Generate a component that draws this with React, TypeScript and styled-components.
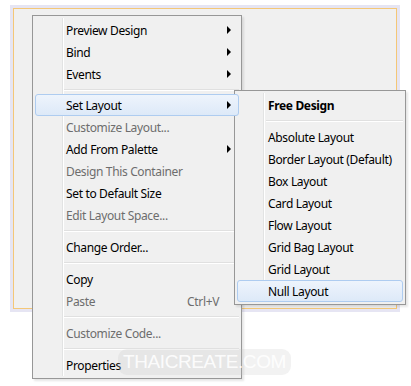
import React from "react";
import styled, { createGlobalStyle } from "styled-components";

const Global = createGlobalStyle`
  html, body { margin: 0; padding: 0; background: #ffffff; }
  body { font-family: "Noto Sans", "Open Sans", sans-serif; }
`;

const Page = styled.div`
  position: relative;
  width: 411px;
  height: 386px;
  overflow: hidden;
  box-sizing: border-box;
  padding: 5px 0 0 10px;
  background: #ffffff;
`;

const Frame = styled.div`
  width: 390px;
  height: 307px;
  box-sizing: border-box;
  border: 3px solid #e6e5f3;
  display: flex;
`;

const Canvas = styled.div`
  flex: 1;
  border: 1px solid #f4c777;
  background: #f0f0f0;
`;

const Menu = styled.div<{ $left: number; $top: number; $width: number; $gutter: number }>`
  position: absolute;
  left: ${(p) => p.$left}px;
  top: ${(p) => p.$top}px;
  width: ${(p) => p.$width}px;
  box-sizing: border-box;
  border: 1px solid #979797;
  background: #f0f0f0;
  padding: 3px 2px 2px 2px;
  display: flex;
  flex-direction: column;
  box-shadow: 2px 2px 2px rgba(0, 0, 0, 0.1);
  &::before {
    content: "";
    position: absolute;
    top: 2px;
    bottom: 2px;
    left: ${(p) => p.$gutter}px;
    width: 1px;
    background: #e2e3e3;
    border-right: 1px solid #ffffff;
  }
`;

const Item = styled.div<{ $disabled?: boolean; $active?: boolean; $bold?: boolean; $indent: number }>`
  position: relative;
  height: 22px;
  display: flex;
  align-items: center;
  box-sizing: border-box;
  padding-left: ${(p) => p.$indent}px;
  padding-right: 8px;
  font-size: 12px;
  letter-spacing: -0.35px;
  font-weight: ${(p) => (p.$bold ? 700 : 400)};
  color: ${(p) => (p.$disabled ? "#6d6d6d" : "#000000")};
  border: 1px solid ${(p) => (p.$active ? "#aeccf0" : "transparent")};
  border-radius: 3px;
  background: ${(p) =>
    p.$active ? "linear-gradient(to bottom, #eef4fc 0%, #dde9f8 100%)" : "transparent"};
  z-index: 1;
`;

const Label = styled.span`
  flex: 1;
  white-space: nowrap;
`;

const Shortcut = styled.span`
  color: #6d6d6d;
  margin-right: 11px;
`;

const Arrow = styled.span`
  width: 0;
  height: 0;
  border-top: 4px solid transparent;
  border-bottom: 4px solid transparent;
  border-left: 4px solid #000000;
  margin-right: -1px;
`;

const Separator = styled.div<{ $indent: number; $h: number }>`
  height: ${(p) => p.$h}px;
  display: flex;
  align-items: center;
  padding-left: ${(p) => p.$indent}px;
  &::after {
    content: "";
    flex: 1;
    height: 1px;
    background: #e0e0e0;
    border-bottom: 1px solid #ffffff;
  }
`;

const Watermark = styled.div`
  position: absolute;
  left: 118px;
  top: 349px;
  padding: 2px 5px;
  border-radius: 9px;
  background: rgba(190, 190, 190, 0.2);
  color: rgba(255, 255, 255, 0.9);
  font-family: "Liberation Sans", Arial, sans-serif;
  font-size: 19px;
  letter-spacing: -0.4px;
  z-index: 5;
`;

type Entry =
  | { kind: "item"; label: string; disabled?: boolean; sub?: boolean; active?: boolean; bold?: boolean; shortcut?: string }
  | { kind: "sep"; h: number };

const mainItems: Entry[] = [
  { kind: "item", label: "Preview Design", sub: true },
  { kind: "item", label: "Bind", sub: true },
  { kind: "item", label: "Events", sub: true },
  { kind: "sep", h: 9 },
  { kind: "item", label: "Set Layout", sub: true, active: true },
  { kind: "item", label: "Customize Layout...", disabled: true },
  { kind: "item", label: "Add From Palette", sub: true },
  { kind: "item", label: "Design This Container", disabled: true },
  { kind: "item", label: "Set to Default Size" },
  { kind: "item", label: "Edit Layout Space...", disabled: true },
  { kind: "sep", h: 10 },
  { kind: "item", label: "Change Order..." },
  { kind: "sep", h: 10 },
  { kind: "item", label: "Copy" },
  { kind: "item", label: "Paste", disabled: true, shortcut: "Ctrl+V" },
  { kind: "sep", h: 10 },
  { kind: "item", label: "Customize Code...", disabled: true },
  { kind: "sep", h: 10 },
  { kind: "item", label: "Properties" },
];

const subItems: Entry[] = [
  { kind: "item", label: "Free Design", bold: true },
  { kind: "sep", h: 10 },
  { kind: "item", label: "Absolute Layout" },
  { kind: "item", label: "Border Layout (Default)" },
  { kind: "item", label: "Box Layout" },
  { kind: "item", label: "Card Layout" },
  { kind: "item", label: "Flow Layout" },
  { kind: "item", label: "Grid Bag Layout" },
  { kind: "item", label: "Grid Layout" },
  { kind: "item", label: "Null Layout", active: true },
];

function renderEntries(entries: Entry[], indent: number, sepIndent: number) {
  return entries.map((e, i) =>
    e.kind === "sep" ? (
      <Separator key={i} $indent={sepIndent} $h={e.h} />
    ) : (
      <Item key={i} $indent={indent} $disabled={e.disabled} $active={e.active} $bold={e.bold}>
        <Label>{e.label}</Label>
        {e.shortcut && <Shortcut>{e.shortcut}</Shortcut>}
        {e.sub && <Arrow />}
      </Item>
    )
  );
}

export default function App() {
  return (
    <Page>
      <Global />
      <Frame>
        <Canvas />
      </Frame>
      <Menu $left={32} $top={15} $width={210} $gutter={29}>
        {renderEntries(mainItems, 30, 29)}
      </Menu>
      <Menu $left={234} $top={90} $width={172} $gutter={28}>
        {renderEntries(subItems, 30, 29)}
      </Menu>
      <Watermark>THAICREATE.COM</Watermark>
    </Page>
  );
}
